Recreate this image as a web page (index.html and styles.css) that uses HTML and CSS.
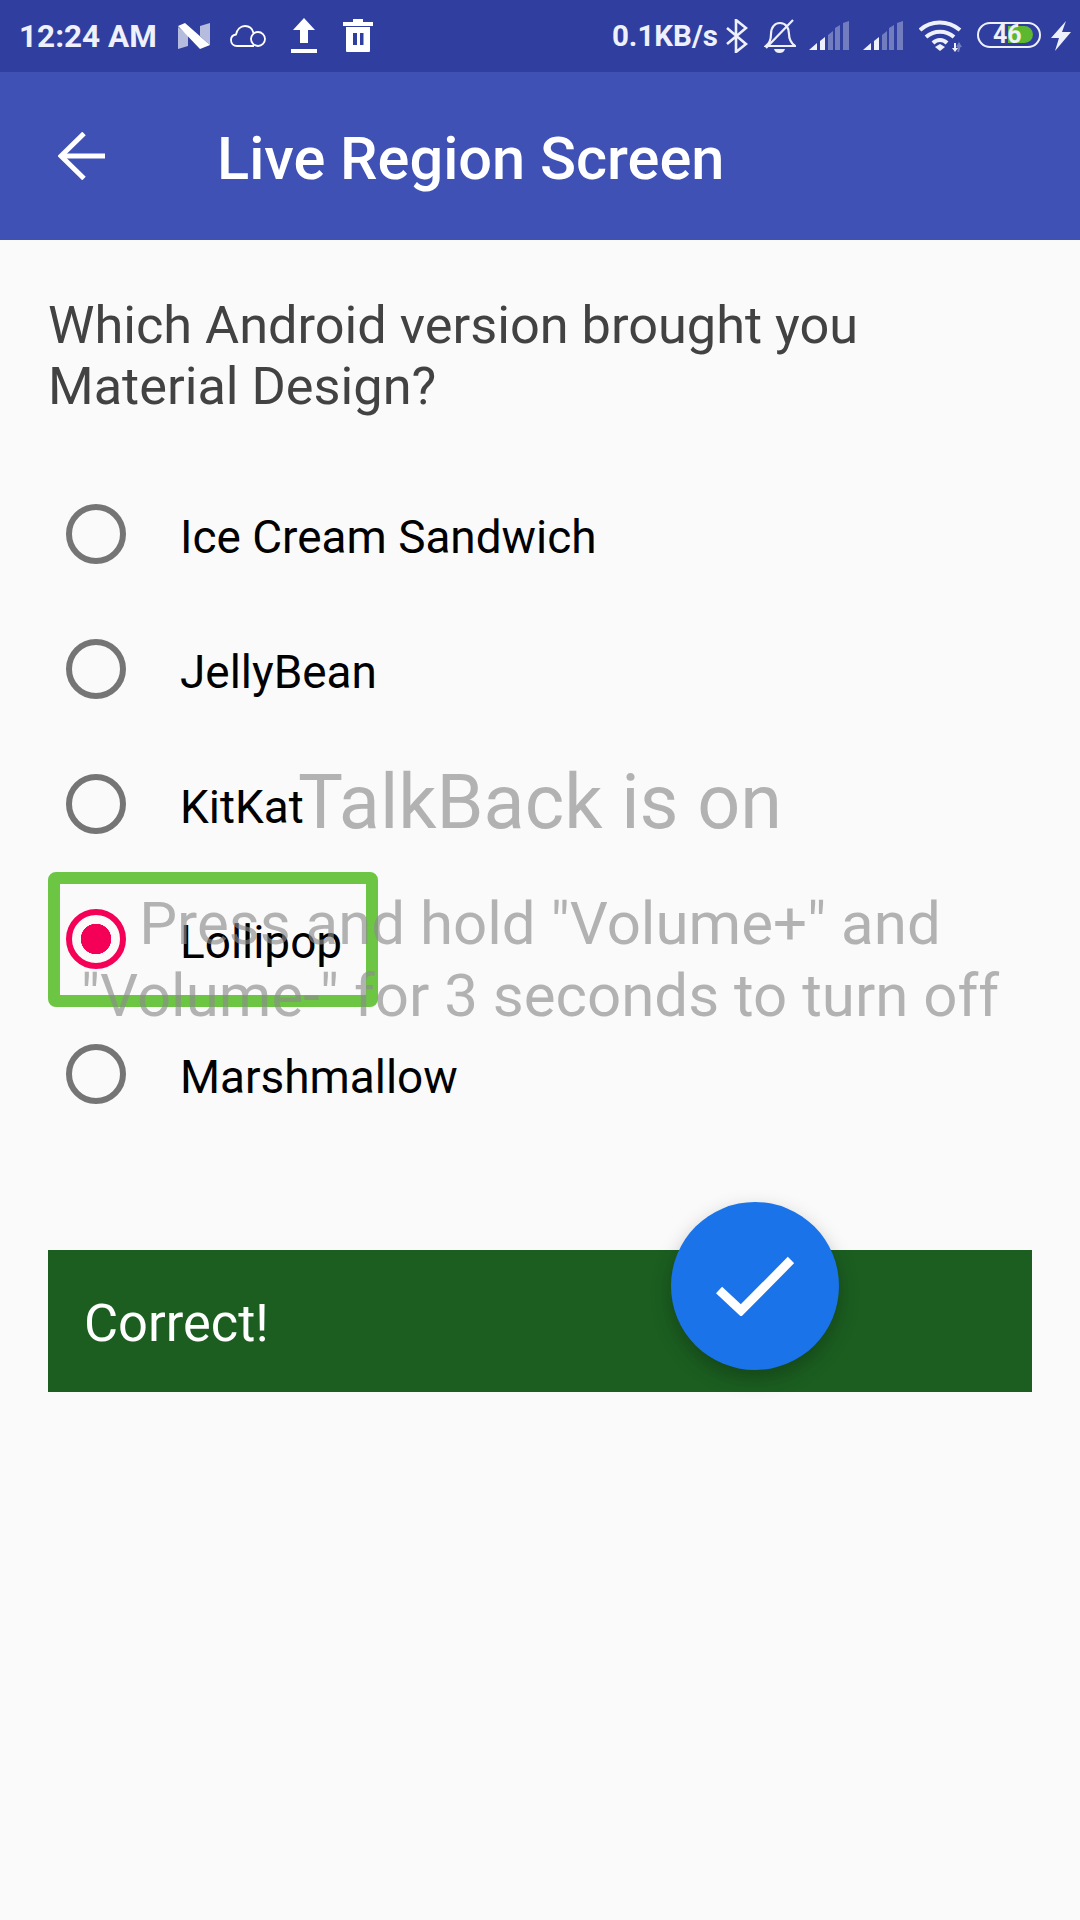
FILE: index.html
```html
<!DOCTYPE html>
<html lang="en">
  <head>
    <meta charset="UTF-8" />
    <meta name="viewport" content="width=device-width, initial-scale=1.0" />
    <title>Live Region Screen</title>
    <link rel="stylesheet" href="styles.css">
  </head>

  <body>
    <!-- Status bar -->
    <div class="status-bar">
      <div class="status-left">
        <span class="clock">12:24 AM</span>
        <svg class="ic-n" width="32" height="28" viewBox="0 0 32 28" fill="#fff">
          <path d="M0 5 L10 13 V24 L0 27Z M22 4 L32 1 V23 L22 14Z" opacity="0.65" />
          <path d="M0 4 L7 1 L32 23 L22 27Z" />
        </svg>
        <svg class="ic-cloud" width="36" height="22" viewBox="0 0 36 22" fill="none" stroke="#fff" stroke-width="1.8">
          <path d="M24 21 H7 C3.500 21 1 18.500 1 15 C1 12 3 10 6 9.500 C7 4.500 10.500 1 15 1 C19.500 1 22.500 4 23.500 8" />
          <circle cx="28" cy="14" r="7" />
        </svg>
        <svg class="ic-upload" width="26" height="36" viewBox="0 0 26 36" fill="#fff">
          <path d="M13 0 L24 12 H17 V25 H9 V12 H2Z" />
          <rect x="0" y="31" width="26" height="4" />
        </svg>
        <svg class="ic-trash" width="30" height="34" viewBox="0 0 30 34" fill="#fff">
          <path d="M10 0 H20 V3 H30 V7 H0 V3 H10Z" />
          <path fill-rule="evenodd" d="M3 8 H27 V32 Q27 33 26 33 H4 Q3 33 3 32Z M10 14 V26 H14 V14Z M17 14 V26 H20.500 V14Z" />
        </svg>
      </div>
      <div class="status-right">
        <span class="speed">0.1KB/s</span>
        <svg class="ic-bt" width="22" height="34" viewBox="0 0 22 34" fill="none" stroke="#eef0fb" stroke-width="2.600">
          <path d="M1 9 L20 25 L10 33 V1 L20 9 L1 25" />
        </svg>
        <svg class="ic-bell" width="32" height="34" viewBox="0 0 32 34" fill="none" stroke="#eef0fb" stroke-width="2.200">
          <path d="M2 27 C6 24 7 20 7 15 C7 8 11 4 16 4 C22 4 25 9 25 15 C25 20 27 24 31 27Z" />
          <path d="M2 29 L29 1" />
          <path d="M10 30 H21 C20 33 18 34 15.500 34 C13 34 11 33 10 30Z" fill="#eef0fb" stroke="none" />
        </svg>
        <svg class="ic-signal" width="40" height="30" viewBox="0 0 40 30" fill="#eef0fb">
          <path d="M0 29 L8 22 V29Z M11 29 V20 L16 16 V29Z" />
          <path d="M19 29 V14 L24 10 V29Z M26 29 V7 L31 4 V29Z M34 29 V2 L40 0 V29Z" opacity="0.35" />
        </svg>
        <svg class="ic-signal" width="40" height="30" viewBox="0 0 40 30" fill="#eef0fb">
          <path d="M0 29 L8 22 V29Z M11 29 V20 L16 16 V29Z" />
          <path d="M19 29 V14 L24 10 V29Z M26 29 V7 L31 4 V29Z M34 29 V2 L40 0 V29Z" opacity="0.35" />
        </svg>
        <svg class="ic-wifi" width="44" height="32" viewBox="0 0 44 32" fill="none" stroke="#eef0fb" stroke-width="4">
          <path d="M1 10 C12 0 29 0 41 10" />
          <path d="M7 17 C15 10 27 10 35 17" />
          <path d="M14 23 C18 19 24 19 28 23" />
          <path d="M16 27 L21 24 L26 27 L21 31Z" fill="#eef0fb" stroke="none" />
          <path d="M35 23 H37 V28 H39 L36 32 L33 28 H35Z" fill="#eef0fb" stroke="none" />
          <path d="M40 32 H38.500 V27 H37 L40 22 L43 27 H41.500Z" fill="#eef0fb" stroke="none" opacity="0.35" />
        </svg>
        <div class="battery">
          <div class="battery-fill"></div>
          <span class="battery-level">46</span>
        </div>
        <svg class="ic-bolt" width="20" height="30" viewBox="0 0 20 30" fill="#eef0fb">
          <path d="M15 0 L0 17 H8 L4 30 L20 11 H11Z" />
        </svg>
      </div>
    </div>

    <!-- App bar -->
    <div class="app-bar">
      <svg class="back-arrow" width="48" height="48" viewBox="0 0 48 48" fill="none" stroke="#fff" stroke-width="5">
        <path d="M47 24 H3" />
        <path d="M26 1.500 L3 24 L26 46.500" />
      </svg>
      <h1>Live Region Screen</h1>
    </div>

    <!-- Quiz -->
    <div class="content">
      <p class="question">Which Android version brought you Material Design?</p>

      <div class="options">
        <div class="option">
          <span class="radio"></span>
          <span class="option-label">Ice Cream Sandwich</span>
        </div>
        <div class="option">
          <span class="radio"></span>
          <span class="option-label">JellyBean</span>
        </div>
        <div class="option">
          <span class="radio"></span>
          <span class="option-label">KitKat</span>
        </div>
        <div class="option">
          <span class="radio checked"></span>
          <span class="option-label">Lollipop</span>
        </div>
        <div class="option">
          <span class="radio"></span>
          <span class="option-label">Marshmallow</span>
        </div>
      </div>

      <div class="result">
        <span class="result-text">Correct!</span>
        <div class="fab">
          <svg width="78" height="60" viewBox="0 0 78 60" fill="none" stroke="#fff" stroke-width="9">
            <path d="M3 34 L25 54.500 L75 4" />
          </svg>
        </div>
      </div>
    </div>

    <!-- TalkBack focus box and toast, over the content -->
    <div class="focus-box"></div>
    <div class="talkback-title">TalkBack is on</div>
    <div class="talkback-hint">Press and hold "Volume+" and<br />"Volume-" for 3 seconds to turn off</div>
  </body>
</html>
```

FILE: styles.css
```css
* {
  box-sizing: border-box;
}

body {
  margin: 0;
  width: 1080px;
  height: 1920px;
  position: relative;
  overflow: hidden;
  font-family: Roboto, "Noto Sans", sans-serif;
  background-color: #fafafa;
}

.status-bar {
  height: 72px;
  padding: 0 9px 0 19px;
  display: flex;
  justify-content: space-between;
  align-items: center;
  background-color: #303f9f;
  color: #eef0fb;
}

.status-left,
.status-right {
  display: flex;
  align-items: center;
}

.clock {
  font-size: 31.5px;
  font-weight: 700;
}

.speed {
  font-size: 29.5px;
  font-weight: 700;
}

.ic-n {
  margin-left: 21px;
}

.ic-cloud {
  margin-left: 20px;
}

.ic-upload {
  margin-left: 25px;
}

.ic-trash {
  margin-left: 26px;
}

.ic-bt {
  margin-left: 8px;
}

.ic-bell {
  margin-left: 16px;
}

.ic-signal {
  margin-left: 13px;
}

.ic-signal + .ic-signal {
  margin-left: 14px;
}

.ic-wifi {
  margin-left: 16px;
}

.battery {
  margin-left: 14px;
  margin-top: -2px;
  width: 64px;
  height: 26px;
  padding: 2px 3px;
  position: relative;
  border: 2.5px solid #eef0fb;
  border-radius: 13px;
}

.battery-fill {
  width: 25px;
  height: 17px;
  margin-left: 26px;
  border-radius: 0 9px 9px 0;
  background-color: #5cb82e;
}

.battery-level {
  position: absolute;
  left: 14px;
  top: -4px;
  font-size: 25px;
  font-weight: 700;
  color: #eef0fb;
}

.ic-bolt {
  margin-left: 10px;
}

.app-bar {
  height: 168px;
  padding-left: 58px;
  display: flex;
  align-items: center;
  background-color: #3f51b5;
}

.app-bar h1 {
  margin: 5px 0 0 111px;
  font-size: 59.5px;
  font-weight: 500;
  color: #fff;
}

.content {
  padding: 55px 48px 0;
}

.question {
  margin: 0;
  font-size: 52.3px;
  line-height: 61px;
  color: #424242;
}

.options {
  margin-top: 49px;
}

.option {
  height: 135px;
  padding-left: 18px;
  display: flex;
  align-items: center;
}

.radio {
  width: 60px;
  height: 60px;
  flex-shrink: 0;
  border: 6px solid #757575;
  border-radius: 50%;
}

.radio.checked {
  border-color: #f50057;
  background: radial-gradient(circle, #f50057 0 15px, transparent 15.5px);
}

.option-label {
  margin: 6px 0 0 54px;
  font-size: 45.9px;
  color: #000;
}

.result {
  height: 142px;
  margin-top: 109px;
  padding-left: 36px;
  display: flex;
  align-items: center;
  position: relative;
  background-color: #1b5e20;
  font-size: 52.4px;
  color: #fff;
}

.result-text {
  margin-top: 4px;
}

.fab {
  width: 168px;
  height: 168px;
  position: absolute;
  left: 623px;
  top: -48px;
  display: flex;
  justify-content: center;
  align-items: center;
  border-radius: 50%;
  background-color: #1a73e8;
  box-shadow: 0 8px 20px rgba(0, 0, 0, 0.25);
}

.focus-box {
  position: absolute;
  left: 48px;
  top: 872px;
  width: 330px;
  height: 135px;
  border: 12px solid #6cc644;
  border-radius: 8px;
}

.talkback-title,
.talkback-hint {
  position: absolute;
  left: 0;
  width: 1080px;
  text-align: center;
  color: rgba(140, 140, 140, 0.65);
}

.talkback-title {
  top: 758px;
  font-size: 75.5px;
}

.talkback-hint {
  top: 888px;
  font-size: 60px;
  line-height: 72px;
}
```
